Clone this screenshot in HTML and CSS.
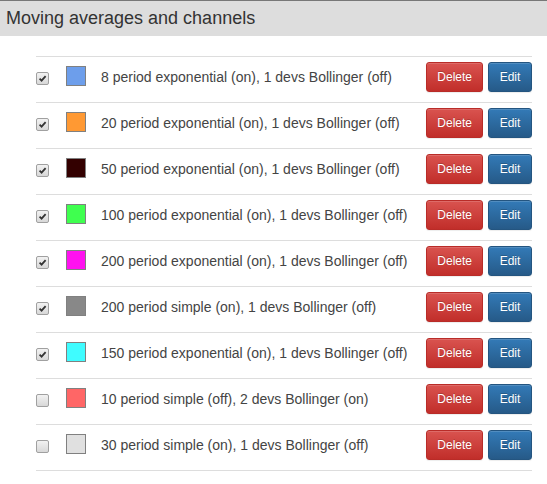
FILE: index.html
```html
<!DOCTYPE html>
<html>

<head>
    <title>Moving averages and channels</title>
    <link rel="stylesheet" href="styles.css">
</head>

<body>
    <div class="panel-heading">Moving averages and channels</div>

    <ul class="ma-list">
        <li class="ma-row">
            <span class="check checked"><svg viewBox="0 0 12 12"><path d="M2.8 6.2 L5 8.4 L9.4 3.4"/></svg></span>
            <span class="swatch" style="background-color: #6d9eeb"></span>
            <span class="ma-text">8 period exponential (on), 1 devs Bollinger (off)</span>
            <button class="btn btn-danger">Delete</button>
            <button class="btn btn-primary">Edit</button>
        </li>
        <li class="ma-row">
            <span class="check checked"><svg viewBox="0 0 12 12"><path d="M2.8 6.2 L5 8.4 L9.4 3.4"/></svg></span>
            <span class="swatch" style="background-color: #ff9933"></span>
            <span class="ma-text">20 period exponential (on), 1 devs Bollinger (off)</span>
            <button class="btn btn-danger">Delete</button>
            <button class="btn btn-primary">Edit</button>
        </li>
        <li class="ma-row">
            <span class="check checked"><svg viewBox="0 0 12 12"><path d="M2.8 6.2 L5 8.4 L9.4 3.4"/></svg></span>
            <span class="swatch" style="background-color: #330000"></span>
            <span class="ma-text">50 period exponential (on), 1 devs Bollinger (off)</span>
            <button class="btn btn-danger">Delete</button>
            <button class="btn btn-primary">Edit</button>
        </li>
        <li class="ma-row">
            <span class="check checked"><svg viewBox="0 0 12 12"><path d="M2.8 6.2 L5 8.4 L9.4 3.4"/></svg></span>
            <span class="swatch" style="background-color: #3fff4f"></span>
            <span class="ma-text">100 period exponential (on), 1 devs Bollinger (off)</span>
            <button class="btn btn-danger">Delete</button>
            <button class="btn btn-primary">Edit</button>
        </li>
        <li class="ma-row">
            <span class="check checked"><svg viewBox="0 0 12 12"><path d="M2.8 6.2 L5 8.4 L9.4 3.4"/></svg></span>
            <span class="swatch" style="background-color: #ff11f0"></span>
            <span class="ma-text">200 period exponential (on), 1 devs Bollinger (off)</span>
            <button class="btn btn-danger">Delete</button>
            <button class="btn btn-primary">Edit</button>
        </li>
        <li class="ma-row">
            <span class="check checked"><svg viewBox="0 0 12 12"><path d="M2.8 6.2 L5 8.4 L9.4 3.4"/></svg></span>
            <span class="swatch" style="background-color: #888888"></span>
            <span class="ma-text">200 period simple (on), 1 devs Bollinger (off)</span>
            <button class="btn btn-danger">Delete</button>
            <button class="btn btn-primary">Edit</button>
        </li>
        <li class="ma-row">
            <span class="check checked"><svg viewBox="0 0 12 12"><path d="M2.8 6.2 L5 8.4 L9.4 3.4"/></svg></span>
            <span class="swatch" style="background-color: #3ffcff"></span>
            <span class="ma-text">150 period exponential (on), 1 devs Bollinger (off)</span>
            <button class="btn btn-danger">Delete</button>
            <button class="btn btn-primary">Edit</button>
        </li>
        <li class="ma-row">
            <span class="check"></span>
            <span class="swatch" style="background-color: #ff6666"></span>
            <span class="ma-text">10 period simple (off), 2 devs Bollinger (on)</span>
            <button class="btn btn-danger">Delete</button>
            <button class="btn btn-primary">Edit</button>
        </li>
        <li class="ma-row">
            <span class="check"></span>
            <span class="swatch" style="background-color: #e0e0e0"></span>
            <span class="ma-text">30 period simple (on), 1 devs Bollinger (off)</span>
            <button class="btn btn-danger">Delete</button>
            <button class="btn btn-primary">Edit</button>
        </li>
    </ul>
</body>

</html>
```

FILE: styles.css
```css
body {
    margin: 0;
    font-family: "Liberation Sans", Arial, sans-serif;
    color: #444;
    background-color: #fff;
}

.panel-heading {
    border-top: 1px solid #777;
    background-color: #ddd;
    height: 35px;
    line-height: 34px;
    padding-left: 6px;
    font-size: 18px;
    color: #333;
}

.ma-list {
    list-style-type: none;
    margin: 20px 0 0 36px;
    padding: 0;
    width: 496px;
    border-bottom: 1px solid #ddd;
}

.ma-row {
    display: flex;
    align-items: center;
    border-top: 1px solid #ddd;
    padding: 5px 0 10px;
}

.check {
    width: 11px;
    height: 11px;
    border: 1px solid #a0a0a0;
    border-radius: 2px;
    background: linear-gradient(to bottom, #f2f2f2, #d8d8d8);
    margin-top: 2px;
    display: flex;
}

.check svg {
    width: 11px;
    height: 11px;
}

.check path {
    fill: none;
    stroke: #333;
    stroke-width: 1.9;
}

.swatch {
    width: 18px;
    height: 18px;
    border: 1px solid #808080;
    margin-left: 17px;
    margin-top: -2px;
}

.ma-text {
    margin-left: 15px;
    flex: 1;
    font-size: 14px;
    color: #444;
}

.btn {
    font-family: "Liberation Sans", Arial, sans-serif;
    font-size: 12px;
    line-height: 18px;
    padding: 5px 10px;
    border: 1px solid;
    border-radius: 3px;
    color: #fff;
    text-shadow: 0 -1px 0 rgba(0, 0, 0, 0.2);
    box-shadow: inset 0 1px 0 rgba(255, 255, 255, 0.15), 0 1px 1px rgba(0, 0, 0, 0.075);
    margin-left: 5px;
}

.btn-danger {
    background-image: linear-gradient(to bottom, #d9534f 0, #c12e2a 100%);
    border-color: #b92c28;
}

.btn-primary {
    background-image: linear-gradient(to bottom, #337ab7 0, #265a88 100%);
    border-color: #245580;
    min-width: 44px;
}
```
